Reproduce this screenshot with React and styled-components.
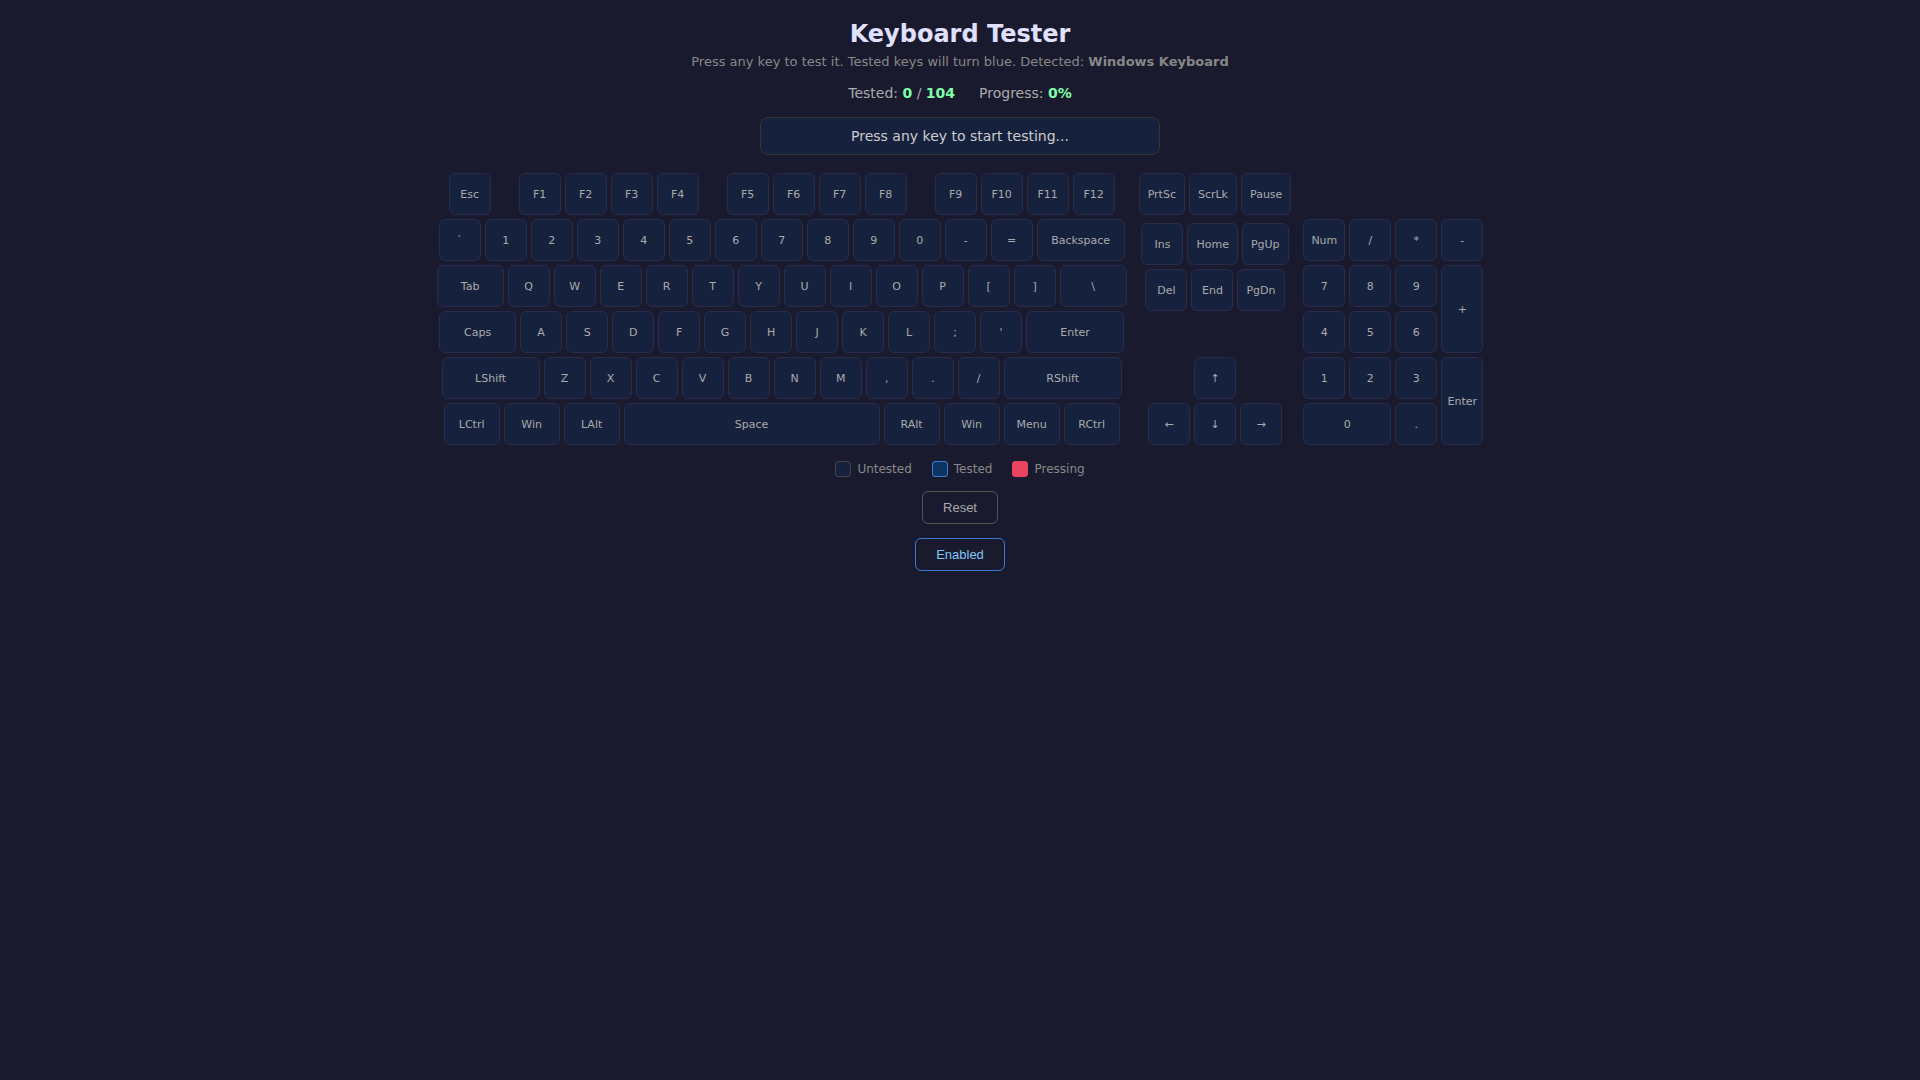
import React from 'react';
import styled, { createGlobalStyle } from 'styled-components'

const GlobalStyle = createGlobalStyle`
  * {
    box-sizing: border-box;
  }
  body {
    margin: 0;
    background-color: #1a1a2e;
    color: #eee;
    font-family: "DejaVu Sans", sans-serif;
  }
`

const AppContainer = styled.main`
  display: flex;
  flex-direction: column;
  align-items: center;
  padding: 20px;
`

const Title = styled.h1`
  margin: 0 0 6px;
  color: #e0e0ff;
  font-size: 24px;
  line-height: 28px;
`

const Subtitle = styled.p`
  margin: 0 0 16px;
  color: #888;
  font-size: 13px;
  line-height: 15px;
  text-align: center;
`

const Stats = styled.div`
  display: flex;
  gap: 24px;
  margin-bottom: 16px;
  color: #aaa;
  font-size: 14px;
  line-height: 16px;

  strong {
    color: #7fffaa;
  }
`

const Display = styled.div`
  width: 100%;
  max-width: 400px;
  margin-bottom: 18px;
  padding: 10px 20px;
  border: 1px solid #333;
  border-radius: 8px;
  background-color: #16213e;
  color: #ccc;
  font-size: 14px;
  line-height: 16px;
  text-align: center;
`

const Keyboard = styled.div`
  display: flex;
  gap: 12px;
  margin-bottom: 16px;
`

const KeyBlock = styled.div`
  display: flex;
  flex-direction: column;
  gap: 4px;
`

const NavGroup = styled(KeyBlock)`
  margin-top: ${props => props.$bottom ? 'auto' : '4px'};
`

const Row = styled.div`
  display: flex;
  justify-content: center;
  gap: 4px;
`

const Spacer = styled.div`
  width: 20px;
`

const Key = styled.kbd`
  display: flex;
  align-items: center;
  justify-content: center;
  min-width: ${props => props.$width || 42}px;
  height: 42px;
  padding: 0 8px;
  border: 1px solid #2a2a4a;
  border-radius: 6px;
  background-color: #16213e;
  color: #aaa;
  font-family: inherit;
  font-size: 11px;
  white-space: nowrap;
  user-select: none;

  ${props => props.$tested && `
    background-color: #0f3460;
    border-color: #3a7bd5;
    color: #7ec8f8;
  `}
  ${props => props.$pressed && `
    background-color: #e94560;
    border-color: #e94560;
    color: #fff;
  `}
`

const Numpad = styled.div`
  display: grid;
  grid-template-columns: repeat(4, 42px);
  grid-auto-rows: 42px;
  gap: 4px;
  align-self: flex-end;
`

const NumpadKey = styled(Key)`
  grid-row: span ${props => props.$rows || 1};
  grid-column: span ${props => props.$cols || 1};
  height: auto;
  padding: 0;
`

const Legend = styled.div`
  display: flex;
  gap: 20px;
  margin-bottom: 14px;
  color: #888;
  font-size: 12px;
  line-height: 16px;
`

const LegendItem = styled.div`
  display: flex;
  align-items: center;
  gap: 6px;
`

const Swatch = styled.span`
  width: 16px;
  height: 16px;
  border: 1px solid ${props => props.$border};
  border-radius: 3px;
  background-color: ${props => props.$color};
`

const Button = styled.button`
  margin-bottom: 14px;
  padding: 8px 20px;
  border: 1px solid ${props => props.$active ? '#3a7bd5' : '#555'};
  border-radius: 6px;
  background: transparent;
  color: ${props => props.$active ? '#7ec8f8' : '#aaa'};
  font-family: "Liberation Sans", Arial, sans-serif;
  font-size: 13px;
  line-height: 15px;
  cursor: pointer;

  &:hover {
    background-color: #16213e;
  }
`

// [code, label, width], null is an empty space between keys
const mainRows = [
  [
    ['Escape', 'Esc'], null,
    ['F1', 'F1'], ['F2', 'F2'], ['F3', 'F3'], ['F4', 'F4'], null,
    ['F5', 'F5'], ['F6', 'F6'], ['F7', 'F7'], ['F8', 'F8'], null,
    ['F9', 'F9'], ['F10', 'F10'], ['F11', 'F11'], ['F12', 'F12'],
  ],
  [
    ['Backquote', '`'], ['Digit1', '1'], ['Digit2', '2'], ['Digit3', '3'], ['Digit4', '4'],
    ['Digit5', '5'], ['Digit6', '6'], ['Digit7', '7'], ['Digit8', '8'], ['Digit9', '9'],
    ['Digit0', '0'], ['Minus', '-'], ['Equal', '='], ['Backspace', 'Backspace', 88],
  ],
  [
    ['Tab', 'Tab', 67], ['KeyQ', 'Q'], ['KeyW', 'W'], ['KeyE', 'E'], ['KeyR', 'R'],
    ['KeyT', 'T'], ['KeyY', 'Y'], ['KeyU', 'U'], ['KeyI', 'I'], ['KeyO', 'O'], ['KeyP', 'P'],
    ['BracketLeft', '['], ['BracketRight', ']'], ['Backslash', '\\', 67],
  ],
  [
    ['CapsLock', 'Caps', 77], ['KeyA', 'A'], ['KeyS', 'S'], ['KeyD', 'D'], ['KeyF', 'F'],
    ['KeyG', 'G'], ['KeyH', 'H'], ['KeyJ', 'J'], ['KeyK', 'K'], ['KeyL', 'L'],
    ['Semicolon', ';'], ['Quote', "'"], ['Enter', 'Enter', 98],
  ],
  [
    ['ShiftLeft', 'LShift', 98], ['KeyZ', 'Z'], ['KeyX', 'X'], ['KeyC', 'C'], ['KeyV', 'V'],
    ['KeyB', 'B'], ['KeyN', 'N'], ['KeyM', 'M'], ['Comma', ','], ['Period', '.'],
    ['Slash', '/'], ['ShiftRight', 'RShift', 118],
  ],
  [
    ['ControlLeft', 'LCtrl', 56], ['MetaLeft', 'Win', 56], ['AltLeft', 'LAlt', 56],
    ['Space', 'Space', 256],
    ['AltRight', 'RAlt', 56], ['MetaRight', 'Win', 56], ['ContextMenu', 'Menu', 56], ['ControlRight', 'RCtrl', 56],
  ],
]

const systemRows = [
  [['PrintScreen', 'PrtSc'], ['ScrollLock', 'ScrLk'], ['Pause', 'Pause']],
]

const editRows = [
  [['Insert', 'Ins'], ['Home', 'Home'], ['PageUp', 'PgUp']],
  [['Delete', 'Del'], ['End', 'End'], ['PageDown', 'PgDn']],
]

const arrowRows = [
  [['ArrowUp', '↑']],
  [['ArrowLeft', '←'], ['ArrowDown', '↓'], ['ArrowRight', '→']],
]

const numpadKeys = [
  { code: 'NumLock', label: 'Num' },
  { code: 'NumpadDivide', label: '/' },
  { code: 'NumpadMultiply', label: '*' },
  { code: 'NumpadSubtract', label: '-' },
  { code: 'Numpad7', label: '7' },
  { code: 'Numpad8', label: '8' },
  { code: 'Numpad9', label: '9' },
  { code: 'NumpadAdd', label: '+', rows: 2 },
  { code: 'Numpad4', label: '4' },
  { code: 'Numpad5', label: '5' },
  { code: 'Numpad6', label: '6' },
  { code: 'Numpad1', label: '1' },
  { code: 'Numpad2', label: '2' },
  { code: 'Numpad3', label: '3' },
  { code: 'NumpadEnter', label: 'Enter', rows: 2 },
  { code: 'Numpad0', label: '0', cols: 2 },
  { code: 'NumpadDecimal', label: '.' },
]

const allCodes = [
  ...[...mainRows, ...systemRows, ...editRows, ...arrowRows].flat().filter(Boolean).map(key => key[0]),
  ...numpadKeys.map(key => key.code),
]

class App extends React.Component {

  state = {
    tested: [],
    pressed: [],
    lastKey: "",
    enabled: true
  }

  componentDidMount() {
    window.addEventListener('keydown', this.handleKeyDown)
    window.addEventListener('keyup', this.handleKeyUp)
  }

  componentWillUnmount() {
    window.removeEventListener('keydown', this.handleKeyDown)
    window.removeEventListener('keyup', this.handleKeyUp)
  }

  handleKeyDown = (event) => {
    const code = event.code
    if (!this.state.enabled || !allCodes.includes(code)) {
      return
    }
    event.preventDefault()
    this.setState(({ tested, pressed }) => ({
      tested: tested.includes(code) ? tested : [...tested, code],
      pressed: pressed.includes(code) ? pressed : [...pressed, code],
      lastKey: code
    }))
  }

  handleKeyUp = (event) => {
    const code = event.code
    this.setState(({ pressed }) => ({ pressed: pressed.filter(item => item !== code) }))
  }

  reset = () => {
    this.setState({ tested: [], pressed: [], lastKey: "" })
  }

  // while disabled the keys work as usual in the browser
  toggleEnabled = () => {
    this.setState({ enabled: !this.state.enabled, pressed: [] })
  }

  renderRows = (rows) => rows.map((row, rowIndex) => (
    <Row key={rowIndex}>
      {row.map((item, index) => {
        if (!item) {
          return <Spacer key={index} />
        }
        const [code, label, width] = item
        return (
          <Key
            key={code}
            $width={width}
            $tested={this.state.tested.includes(code)}
            $pressed={this.state.pressed.includes(code)}
          >
            {label}
          </Key>
        )
      })}
    </Row>
  ))

  render() {
    const { tested, pressed, lastKey, enabled } = this.state
    const total = allCodes.length
    const progress = Math.round(tested.length / total * 100)

    return (
      <AppContainer>
        <GlobalStyle />
        <Title>Keyboard Tester</Title>
        <Subtitle>
          Press any key to test it. Tested keys will turn blue. Detected: <strong>Windows Keyboard</strong>
        </Subtitle>

        <Stats>
          <span>Tested: <strong>{tested.length}</strong> / <strong>{total}</strong></span>
          <span>Progress: <strong>{progress}%</strong></span>
        </Stats>

        <Display>{lastKey || 'Press any key to start testing...'}</Display>

        <Keyboard>
          <KeyBlock>{this.renderRows(mainRows)}</KeyBlock>

          <KeyBlock>
            {this.renderRows(systemRows)}
            <NavGroup>{this.renderRows(editRows)}</NavGroup>
            <NavGroup $bottom>{this.renderRows(arrowRows)}</NavGroup>
          </KeyBlock>

          <Numpad>
            {numpadKeys.map(({ code, label, rows, cols }) => (
              <NumpadKey
                key={code}
                $rows={rows}
                $cols={cols}
                $tested={tested.includes(code)}
                $pressed={pressed.includes(code)}
              >
                {label}
              </NumpadKey>
            ))}
          </Numpad>
        </Keyboard>

        <Legend>
          <LegendItem><Swatch $color="#16213e" $border="#444" />Untested</LegendItem>
          <LegendItem><Swatch $color="#0f3460" $border="#3a7bd5" />Tested</LegendItem>
          <LegendItem><Swatch $color="#e94560" $border="#e94560" />Pressing</LegendItem>
        </Legend>

        <Button type="button" onClick={this.reset}>Reset</Button>
        <Button type="button" $active={enabled} onClick={this.toggleEnabled}>
          {enabled ? 'Enabled' : 'Disabled'}
        </Button>
      </AppContainer>
    );
  }
}

export default App;
